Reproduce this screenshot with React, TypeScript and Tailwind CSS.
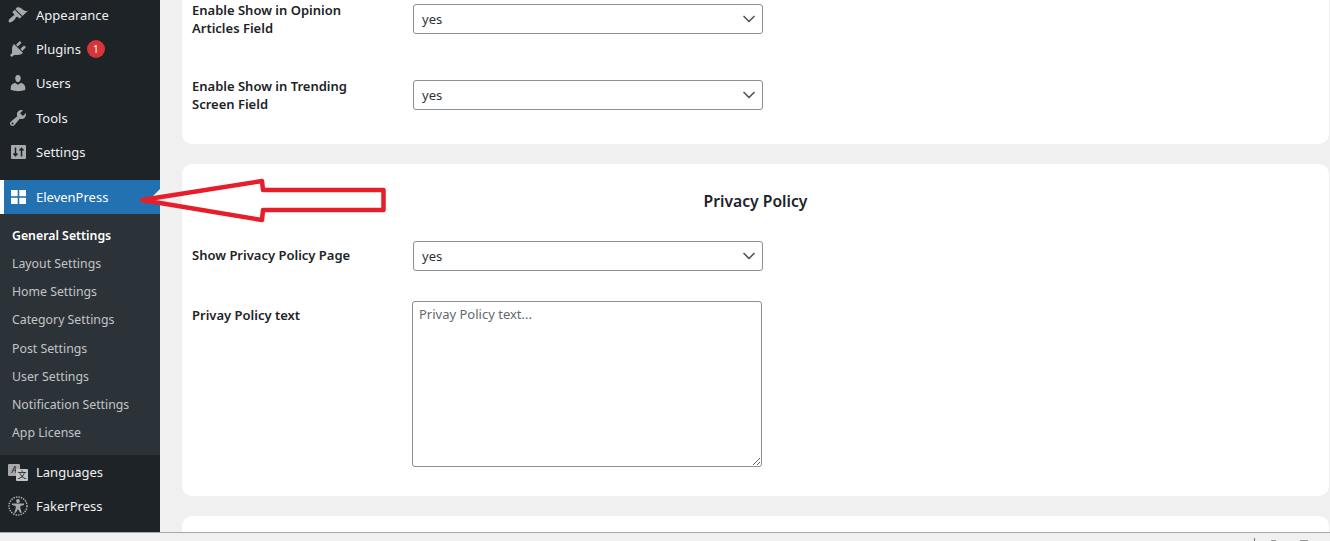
import { ChevronDown } from 'lucide-react';
import type { ReactNode } from 'react';

const font = "font-['Noto_Sans','Open_Sans',sans-serif]";

const Icon = ({ d }: { d: string }) => (
  <svg width="20" height="20" viewBox="0 0 20 20" fill="#a7aaad">
    <path d={d} />
  </svg>
);

const brush =
  'M14.48 11.06L7.41 3.99l1.5-1.5c.5-.56 2.3-.47 3.51.32 1.21.8 1.43 1.28 2.91 2.1 1.18.64 2.45 1.26 4.67.85zM13.77 11.77L6.7 4.7 4.93 6.47c-.39.39-.39 1.02 0 1.41l1.06 1.06c.39.39.39 1.03 0 1.42-.6.6-1.43 1.11-2.21 1.69-.35.26-.7.53-1.01.84C1.43 13.4-.2 16 .9 17.1 2 18.2 4.6 16.6 5.94 15.26c.31-.31.58-.66.84-1.01.58-.78 1.09-1.61 1.69-2.21.39-.39 1.03-.39 1.42 0l1.06 1.06c.39.39 1.02.39 1.41 0z';
const plug =
  'M13.11 4.36L9.87 7.6 8 5.73l3.24-3.24c.35-.34 1.05-.2 1.56.32.52.51.66 1.21.31 1.55zm-8 1.77l.91-1.12 9.01 9.01-1.19.84c-.71.71-2.63 1.16-3.82 1.16H6.14L4.9 17.26c-.59.59-1.54.59-2.12 0-.59-.58-.59-1.53 0-2.12l1.24-1.24v-3.88c0-1.13.4-3.19 1.09-3.89zm7.26 3.97l3.24-3.24c.34-.35 1.04-.21 1.55.31.52.51.66 1.21.31 1.55l-3.24 3.25z';
const user =
  'M10 9.25c-2.27 0-2.73-3.44-2.73-3.44C7 4.02 7.82 2 9.97 2c2.16 0 2.98 2.02 2.71 3.81 0 0-.41 3.44-2.68 3.44zm0 2.57L12.72 10c2.39 0 4.52 2.33 4.52 4.53v2.49s-3.65 1.13-7.24 1.13c-3.65 0-7.24-1.13-7.24-1.13v-2.49c0-2.25 1.94-4.48 4.47-4.48z';
const wrench =
  'M16.68 9.77c-1.34 1.34-3.3 1.67-4.95.99l-5.41 6.52c-.99.99-2.59.99-3.58 0s-.99-2.59 0-3.57l6.52-5.42c-.68-1.65-.35-3.61.99-4.95 1.28-1.28 3.12-1.62 4.72-1.06l-2.89 2.89 2.82 2.82 2.86-2.87c.53 1.58.18 3.39-1.08 4.65zM3.81 16.21c.4.39 1.04.39 1.43 0 .4-.4.4-1.04 0-1.43-.39-.4-1.03-.4-1.43 0-.39.39-.39 1.03 0 1.43z';

const SettingsIcon = () => (
  <svg width="15" height="14" viewBox="0 0 15 14">
    <rect width="15" height="14" rx="1" fill="#a7aaad" />
    <path d="M4.500 2.500v8M2.500 8.500l2 2.200 2-2.200M10.500 11.500v-8M8.500 5.500l2-2.200 2 2.200" stroke="#1d2327" strokeWidth="1.500" fill="none" />
  </svg>
);

const GridIcon = () => (
  <svg width="15" height="14" viewBox="0 0 15 14" fill="#fff">
    <rect x="0" y="0" width="6.700" height="6.200" />
    <rect x="8.300" y="0" width="6.700" height="6.200" />
    <rect x="0" y="7.800" width="6.700" height="6.200" />
    <rect x="8.300" y="7.800" width="6.700" height="6.200" />
  </svg>
);

const LanguagesIcon = () => (
  <span className="relative block w-5 h-[17px]">
    <span className="absolute left-0 top-0 w-3 h-3 bg-[#a7aaad] rounded-[1px] text-[9px] leading-3 text-center italic text-[#1d2327]">A</span>
    <span className="absolute right-0 bottom-0 w-3 h-3 bg-[#c3c4c7] rounded-[1px] text-[9px] leading-3 text-center text-[#1d2327] font-['Noto_Sans_CJK_SC',sans-serif]">文</span>
  </span>
);

const AccessIcon = () => (
  <svg width="20" height="20" viewBox="0 0 20 20" fill="#a7aaad">
    <circle cx="10" cy="10" r="9" fill="none" stroke="#a7aaad" strokeWidth="1.500" strokeDasharray="1.500 1" />
    <circle cx="10" cy="5" r="1.900" />
    <path d="M4 7.500h12v1.600l-3.700.8v2.400l1.500 4.500h-1.700L10 13l-2.100 3.800H6.200l1.500-4.500V9.900L4 9.100z" />
  </svg>
);

const MenuItem = ({ icon, label, badge, h = 'h-[34px]' }: { icon: ReactNode; label: string; badge?: string; h?: string }) => (
  <div className={`flex items-center ${h} text-[13px] text-[#f0f0f1]`}>
    <span className="w-9 flex justify-center items-center shrink-0">{icon}</span>
    <span className="mt-[2px]">{label}</span>
    {badge && (
      <span className="ml-[6px] w-[18px] h-[18px] rounded-full bg-[#d63638] text-white text-[10px] flex items-center justify-center">{badge}</span>
    )}
  </div>
);

const subItems = ['Layout Settings', 'Home Settings', 'Category Settings', 'Post Settings', 'User Settings', 'Notification Settings', 'App License'];

const Sidebar = () => (
  <aside className="w-40 shrink-0 bg-[#1d2327]">
    <MenuItem h="h-[30px] mb-[2px]" icon={<Icon d={brush} />} label="Appearance" />
    <MenuItem icon={<Icon d={plug} />} label="Plugins" badge="1" />
    <MenuItem icon={<Icon d={user} />} label="Users" />
    <MenuItem h="h-[35px]" icon={<Icon d={wrench} />} label="Tools" />
    <MenuItem icon={<SettingsIcon />} label="Settings" />
    <div className="h-[11px]" />
    <div className="relative flex items-center h-[34px] bg-[#2271b1] border-l-4 border-white text-[13px] text-white">
      <span className="w-8 pl-[7px] flex items-center shrink-0"><GridIcon /></span>
      <span className="mt-[2px]">ElevenPress</span>
      <span className="absolute right-0 top-[9px] border-y-8 border-r-8 border-y-transparent border-r-[#f0f0f1]" />
    </div>
    <div className="bg-[#2c3338] pt-[8.3px] h-[241px]">
      <div className="h-[28.1px] flex items-center pl-3 text-[12.3px] font-semibold text-white">General Settings</div>
      {subItems.map((s) => (
        <div key={s} className="h-[28.1px] flex items-center pl-3 text-[12.3px] text-[#c3c4c7]">{s}</div>
      ))}
    </div>
    <MenuItem icon={<LanguagesIcon />} label="Languages" />
    <MenuItem icon={<AccessIcon />} label="FakerPress" />
  </aside>
);

const Select = () => (
  <div className="relative w-[350px] h-[30px]">
    <select className="appearance-none w-full h-full bg-white border border-[#8c8f94] rounded-[3px] pl-2 pt-[2px] text-[13px] text-[#2c3338]">
      <option>yes</option>
    </select>
    <ChevronDown size={20} strokeWidth={2} className="absolute right-[4px] top-[5px] text-[#50575e] pointer-events-none" />
  </div>
);

const Label = ({ children }: { children: ReactNode }) => (
  <div className="w-[221px] shrink-0 text-[13px] leading-[18px] font-semibold text-[#1d2327]">{children}</div>
);

const Arrow = () => (
  <svg className="absolute left-[130px] top-[170px] pointer-events-none" width="270" height="60" viewBox="0 0 270 60">
    <path d="M12 30 L132 11 L133 20 L253.500 20 L253.500 40 L133 40 L132 50 Z" fill="none" stroke="#e61e2a" strokeWidth="4.500" strokeLinejoin="round" />
  </svg>
);

export default function App() {
  return (
    <div className={`relative h-[541px] w-[1330px] overflow-hidden bg-[#f0f0f1] ${font}`}>
      <div className="flex h-[533px] border-b border-[#a9a9a9]">
        <Sidebar />
        <main className="flex-1 pl-[22px] pr-px overflow-hidden">
          <section className="h-[144px] bg-white rounded-b-[10px] px-[10px] pt-px">
            <div className="flex h-[76px]">
              <Label>Enable Show in Opinion<br />Articles Field</Label>
              <div className="pt-[3px]"><Select /></div>
            </div>
            <div className="flex">
              <Label>Enable Show in Trending<br />Screen Field</Label>
              <div className="pt-[3px]"><Select /></div>
            </div>
          </section>

          <section className="mt-5 h-[332px] bg-white rounded-[10px] px-[10px] pt-[25px]">
            <h2 className="h-[24px] leading-[24px] text-center text-[15.7px] font-semibold text-[#1d2327]">Privacy Policy</h2>
            <div className="flex mt-[28px] h-[30px]">
              <Label><div className="pt-[5px]">Show Privacy Policy Page</div></Label>
              <Select />
            </div>
            <div className="flex mt-[30px]">
              <div className="w-[220px] shrink-0 pt-[5px] text-[13px] leading-[18px] font-semibold text-[#1d2327]">Privay Policy text</div>
              <textarea
                placeholder="Privay Policy text..."
                className="w-[350px] h-[166px] bg-white border border-[#8c8f94] rounded-[3px] px-[6px] py-[3px] text-[13px] placeholder:text-[#646970]"
              />
            </div>
          </section>

          <section className="mt-5 h-[40px] bg-white rounded-t-[10px]" />
        </main>
      </div>
      <div className="flex justify-end h-2 pr-[22px] pt-[5px]">
        <span className="w-px h-[3px] bg-[#777]" />
        <span className="ml-4 mt-[2px] w-[5px] h-px bg-[#999]" />
        <span className="ml-6 mt-[2px] w-2 h-px bg-[#999]" />
      </div>
      <Arrow />
    </div>
  );
}
